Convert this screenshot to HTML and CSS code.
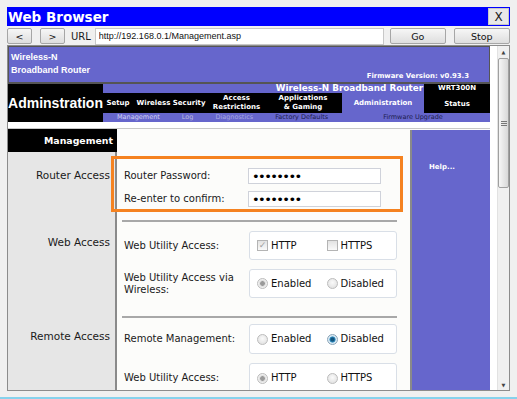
FILE: index.html
```html
<!DOCTYPE html>
<html lang="en">
<head>
    <meta charset="UTF-8">
    <meta name="viewport" content="width=device-width, initial-scale=1.0">
    <title>Web Browser - Management</title>
    <link rel="stylesheet" href="styles.css">
</head>
<body>
    <div class="window">
        <!-- Title bar -->
        <div class="titlebar">
            <span class="title">Web Browser</span>
            <button class="close">X</button>
        </div>

        <!-- Address bar -->
        <div class="toolbar">
            <button class="btn back">&lt;</button>
            <button class="btn fwd">&gt;</button>
            <span class="url-label">URL</span>
            <input class="url" type="text" value="http://192.168.0.1/Management.asp">
            <button class="btn go">Go</button>
            <button class="btn stop">Stop</button>
        </div>

        <div class="frame">
            <div class="page">
                <header class="brand">
                    <div class="brand-name">Wireless-N<br>Broadband Router</div>
                    <div class="firmware">Firmware Version: v0.93.3</div>
                </header>

                <nav class="menu">
                    <div class="menu-title">Adminstration</div>
                    <div class="product">Wireless-N Broadband Router</div>
                    <div class="model"><span>WRT300N</span><span>Status</span></div>
                    <ul class="tabs">
                        <li>Setup</li>
                        <li>Wireless Security</li>
                        <li>Access<br>Restrictions</li>
                        <li>Applications<br>&amp; Gaming</li>
                        <li class="active">Administration</li>
                    </ul>
                    <ul class="subtabs">
                        <li class="current">Management</li>
                        <li class="muted">Log</li>
                        <li class="faint">Diagnostics</li>
                        <li class="dark">Factory Defaults</li>
                        <li class="dark last">Firmware Upgrade</li>
                    </ul>
                </nav>

                <main class="panel">
                    <div class="side side-head">Management</div>
                    <div class="body"></div>
                    <aside class="help">Help...</aside>

                    <!-- Router Access -->
                    <div class="side side-router">Router Access</div>
                    <div class="body section sec-router">
                        <div class="field">
                            <label>Router Password:</label>
                            <input class="pass" type="password" value="admin123">
                        </div>
                        <div class="field">
                            <label>Re-enter to confirm:</label>
                            <input class="pass" type="password" value="admin123">
                        </div>
                    </div>

                    <!-- Web Access -->
                    <div class="side side-web">Web Access</div>
                    <div class="body section sec-web">
                        <div class="field">
                            <label>Web Utility Access:</label>
                            <div class="choice">
                                <span class="opt"><span class="box checked">&#10003;</span>HTTP</span>
                                <span class="opt"><span class="box"></span>HTTPS</span>
                            </div>
                        </div>
                        <div class="field">
                            <label>Web Utility Access via<br>Wireless:</label>
                            <div class="choice">
                                <span class="opt"><span class="dot grey"></span>Enabled</span>
                                <span class="opt"><span class="dot"></span>Disabled</span>
                            </div>
                        </div>
                    </div>

                    <!-- Remote Access -->
                    <div class="side side-remote">Remote Access</div>
                    <div class="body section sec-remote">
                        <div class="field">
                            <label>Remote Management:</label>
                            <div class="choice tall">
                                <span class="opt"><span class="dot"></span>Enabled</span>
                                <span class="opt"><span class="dot blue"></span>Disabled</span>
                            </div>
                        </div>
                        <div class="field">
                            <label>Web Utility Access:</label>
                            <div class="choice tall">
                                <span class="opt"><span class="dot grey"></span>HTTP</span>
                                <span class="opt"><span class="dot"></span>HTTPS</span>
                            </div>
                        </div>
                    </div>

                    <!-- highlight around the password fields -->
                    <div class="callout"></div>
                </main>
            </div>

            <div class="scrollbar">
                <div class="arrow">&#9650;</div>
                <div class="thumb"><span class="grip"></span></div>
                <div class="track"></div>
                <div class="arrow">&#9660;</div>
            </div>
        </div>

        <div class="edge"></div>
    </div>
</body>
</html>
```

FILE: styles.css
```css
* {
    box-sizing: border-box;
}

body {
    margin: 0;
    background: #f0f0f0;
    font-family: "DejaVu Sans", sans-serif;
    font-size: 10px;
    color: #1a1a1a;
}

ul {
    margin: 0;
    padding: 0;
    list-style: none;
}

.window {
    width: 517px;
    height: 399px;
    padding: 7px 7px 0;
    display: flex;
    flex-direction: column;
    overflow: hidden;
}

/* title bar */
.titlebar {
    height: 19px;
    background: #0000ff;
    display: flex;
    align-items: flex-start;
    justify-content: space-between;
    padding: 1px 1px 0 1px;
}

.title {
    color: #fff;
    font-weight: bold;
    font-size: 13.5px;
    line-height: 18px;
}

.close {
    width: 21px;
    height: 17px;
    padding: 0;
    border: 1px solid #c8c8c8;
    background: #e8e8e8;
    font-family: "DejaVu Sans", sans-serif;
    font-size: 12px;
    color: #222;
}

/* address bar */
.toolbar {
    height: 19px;
    display: flex;
    align-items: center;
    padding-top: 1px;
}

.btn {
    height: 16px;
    padding: 0;
    border: 1px solid #a6a6a6;
    border-radius: 2px;
    background: linear-gradient(#f6f6f6, #dedede);
    font-family: "DejaVu Sans", sans-serif;
    font-size: 9.5px;
    color: #111;
}

.back, .fwd {
    width: 25px;
}

.fwd {
    margin-left: 8px;
}

.url-label {
    margin-left: 6px;
    font-size: 10px;
}

.url {
    width: 289px;
    height: 17px;
    margin-left: 4px;
    padding: 0 3px;
    border: 1px solid #c8c8c8;
    background: #fff;
    font-family: "Liberation Sans", sans-serif;
    font-size: 9px;
    color: #111;
}

.go, .stop {
    width: 56px;
}

.go {
    margin-left: 6px;
}

.stop {
    margin-left: 8px;
}

/* browser viewport */
.frame {
    height: 346px;
    border: 1px solid #8c8c8c;
    background: #fff;
    display: flex;
}

.page {
    width: 482px;
    overflow: hidden;
}

.brand {
    height: 38px;
    background: #6666cc;
    border: 1px solid #555;
    border-bottom-width: 2px;
    color: #fff;
    display: flex;
    justify-content: space-between;
}

.brand-name {
    padding: 4px 0 0 2px;
    font-family: "Liberation Sans", sans-serif;
    font-weight: bold;
    font-size: 9px;
    line-height: 13px;
}

.firmware {
    align-self: flex-end;
    padding: 0 20px 1px 0;
    font-weight: bold;
    font-size: 6.9px;
    line-height: 9px;
}

/* main menu */
.menu {
    display: grid;
    grid-template-columns: 95px 1fr 66px;
    grid-template-rows: 9px 20px 9px;
    color: #fff;
}

.menu-title {
    grid-row: 1 / 4;
    background: #000;
    display: flex;
    align-items: center;
    justify-content: center;
    font-family: "Liberation Sans", sans-serif;
    font-weight: bold;
    font-size: 14px;
}

.product {
    grid-column: 2;
    grid-row: 1;
    background: #6666cc;
    text-align: right;
    padding-right: 1px;
    font-weight: bold;
    font-size: 8.8px;
    line-height: 9px;
}

.model {
    grid-column: 3;
    grid-row: 1 / 3;
    background: #000;
    display: flex;
    flex-direction: column;
    align-items: center;
    justify-content: space-between;
    padding-bottom: 4px;
    font-weight: bold;
    font-size: 7px;
    line-height: 9px;
}

.tabs {
    grid-column: 2;
    grid-row: 2;
    background: #000;
    display: grid;
    grid-template-columns: 30px 76px 55px 78px 1fr;
}

.tabs li {
    display: flex;
    align-items: center;
    justify-content: center;
    text-align: center;
    font-weight: bold;
    font-size: 7px;
    line-height: 9px;
}

.tabs .active {
    background: #6666cc;
}

.subtabs {
    grid-column: 2 / 4;
    grid-row: 3;
    background: #6666cc;
    display: flex;
    gap: 22px;
    padding-left: 14px;
    font-size: 6.5px;
    line-height: 9px;
}

.subtabs .current { color: #d2d2f4; }
.subtabs .muted { color: #bcbcdc; }
.subtabs .faint { color: #a6a6e2; }
.subtabs .dark { color: #1c1c4c; }
.subtabs .last { margin-left: 33px; }

/* settings panel */
.panel {
    position: relative;
    margin-top: 6px;
    border-top: 1px solid #c8c8c8;
    background: #fcfcfa;
    display: grid;
    grid-template-columns: 109px 293px 80px;
    grid-template-rows: 23px 70px 96px 1fr;
}

.side {
    background: #e6e6e6;
    border-right: 2px solid #8a8a8a;
    text-align: right;
    padding-right: 5px;
    font-size: 10.5px;
    line-height: 13px;
}

.side-head {
    background: #000;
    border-right-color: #000;
    color: #fff;
    display: flex;
    align-items: center;
    justify-content: flex-end;
    padding-right: 2px;
    font-weight: bold;
    font-size: 9.4px;
}

.side-router { padding-top: 17px; }
.side-web { padding-top: 14px; }
.side-remote { padding-top: 12px; }

.help {
    grid-column: 3;
    grid-row: 1 / 5;
    margin-top: 1px;
    background: #6666cc;
    border-left: 2px solid #8a8a8a;
    padding: 33px 0 0 17px;
    color: #fff;
    font-weight: bold;
    font-size: 7px;
}

.section {
    margin: 0 13px 0 5px;
    padding-left: 2px;
    border-bottom: 2px solid #a8a8a8;
    display: flex;
    flex-direction: column;
    gap: 9px;
}

.sec-router {
    padding-top: 16px;
    gap: 7px;
}

.sec-web {
    padding-top: 9px;
}

.sec-remote {
    padding-top: 6px;
    border-bottom: none;
}

.field {
    display: grid;
    grid-template-columns: 124px 1fr;
    align-items: center;
    line-height: 12px;
}

.pass {
    width: 133px;
    height: 16px;
    padding: 0 3px;
    border: 1px solid #cfd2da;
    background: #fff;
    font-family: "DejaVu Sans", sans-serif;
    font-size: 13px;
    letter-spacing: -1.6px;
    color: #000;
}

.choice {
    width: 148px;
    height: 29px;
    margin-left: 1px;
    border: 1px solid #d9dfe7;
    border-radius: 3px;
    background: #fff;
    display: flex;
    align-items: center;
    padding-left: 7px;
    color: #111;
}

.choice.tall {
    height: 30px;
}

.opt {
    width: 70px;
    display: flex;
    align-items: center;
    gap: 3px;
}

.box {
    width: 11px;
    height: 11px;
    border: 1px solid #b4b4b4;
    background: linear-gradient(#e2e2e2, #fafafa);
    color: #a0a0a0;
    font-size: 9px;
    line-height: 9px;
    text-align: center;
}

.dot {
    width: 11px;
    height: 11px;
    border-radius: 50%;
    border: 1px solid #bcbcbc;
    background: radial-gradient(circle at 50% 40%, #fafafa, #dcdcdc);
}

.dot.grey {
    background: radial-gradient(circle, #9a9a9a 0 2px, #d8d8d8 2.6px, #f0f0f0 4px);
}

.dot.blue {
    border-color: #8aa4b8;
    background: radial-gradient(circle, #12557f 0 1.6px, #3b96c8 2.8px, #dbeaf4 3.4px);
}

.callout {
    position: absolute;
    left: 103px;
    top: 27px;
    width: 292px;
    height: 56px;
    border: 3px solid #f58220;
}

/* scrollbar */
.scrollbar {
    width: 12px;
    margin-left: auto;
    background: #f0f0f0;
    border-left: 1px solid #e2e2e2;
    display: flex;
    flex-direction: column;
}

.arrow {
    height: 11px;
    display: flex;
    align-items: center;
    justify-content: center;
    font-size: 5px;
    color: #444;
}

.thumb {
    height: 130px;
    margin-top: 1px;
    border: 1px solid #a0a0a0;
    border-radius: 2px;
    background: linear-gradient(90deg, #f6f6f6, #d8d8d8);
    display: flex;
    align-items: center;
    justify-content: center;
}

.grip {
    width: 6px;
    height: 5px;
    border-top: 1px solid #777;
    border-bottom: 1px solid #777;
    background: linear-gradient(#777, #777) center / 100% 1px no-repeat;
}

.track {
    flex: 1;
}

.edge {
    height: 8px;
    margin: 0 -7px;
    border-bottom: 2px solid #86d2ec;
}
```
